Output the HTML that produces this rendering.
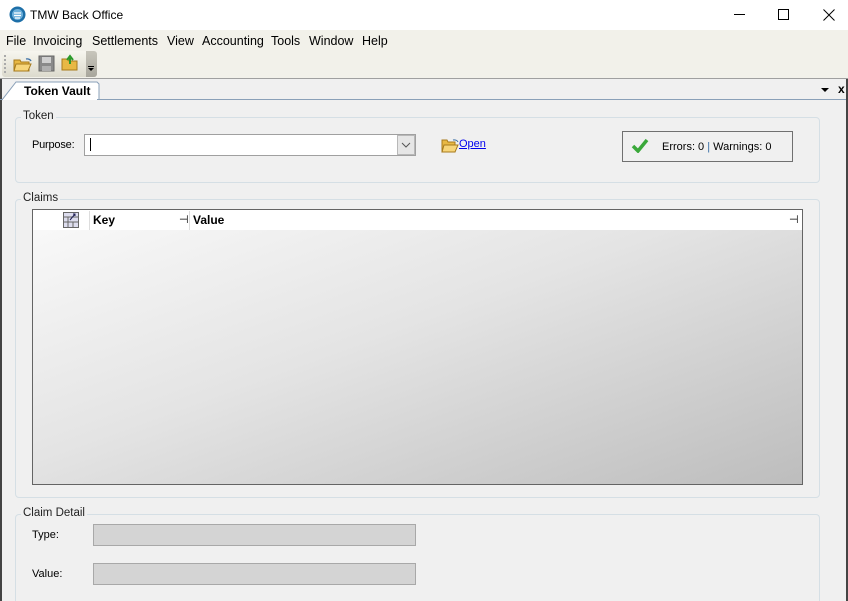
<!DOCTYPE html>
<html style="overflow:hidden;width:848px;height:601px"><head><meta charset="utf-8"><style>
*{box-sizing:border-box;margin:0;padding:0}
body{width:848px;height:601px;overflow:hidden;background:#f0f0f0;font-family:"Liberation Sans",sans-serif;font-size:12px;color:#000;position:relative}
.a{position:absolute}
.m{position:absolute;top:34px;font-size:12.5px}
.grp{position:absolute;border:1px solid #d5dfe5;border-radius:4px}
.lbl{position:absolute;background:#f0f0f0;padding:0 2px;color:#222;font-size:11.5px;line-height:13px}
</style></head><body>
<div class="a" style="left:0;top:0;width:848px;height:30px;background:#fff"></div>
<svg class="a" style="top:6px;left:9px" width="17" height="17" viewBox="0 0 17 17"><circle cx="8.5" cy="8.5" r="8" fill="#1d6fa8"/><circle cx="8.5" cy="8.5" r="5.5" fill="#6fb1dc"/><path d="M5 7h7M5 9.5h7M6 12h5" stroke="#fff" stroke-width="1.2"/></svg>
<div class="a" style="left:30px;top:8px;font-size:12px">TMW Back Office</div>
<div class="a" style="left:734px;top:14px;width:11px;height:1px;background:#000"></div>
<div class="a" style="left:778px;top:9px;width:11px;height:11px;border:1px solid #000"></div>
<svg class="a" style="left:823px;top:9px" width="12" height="12"><path d="M0.5 0.5L11.5 11.5M11.5 0.5L0.5 11.5" stroke="#000" stroke-width="1"/></svg>
<div class="a" style="left:0;top:30px;width:848px;height:48px;background:#f2f1ea"></div>
<div class="m" style="left:6px">File</div>
<div class="m" style="left:33px">Invoicing</div>
<div class="m" style="left:92px">Settlements</div>
<div class="m" style="left:167px">View</div>
<div class="m" style="left:202px">Accounting</div>
<div class="m" style="left:271px">Tools</div>
<div class="m" style="left:309px">Window</div>
<div class="m" style="left:362px">Help</div>
<div class="a" style="left:2px;top:51px;width:95px;height:26px;border-radius:3px;background:linear-gradient(#f7f6ef,#dcdacd)"></div>
<div class="a" style="left:4px;top:55px;width:2px;height:18px;border-left:2px dotted #aaa"></div>
<svg class="a" style="left:13px;top:55px" width="20" height="18"><path d="M1 5h6l1 2h8v9H1z" fill="#e8b844" stroke="#a77a1c"/><path d="M3 9h15l-3 7H1z" fill="#f7d57a" stroke="#a77a1c"/><path d="M13 4a4 3 0 0 1 5 2" stroke="#3a6ea5" fill="none" stroke-width="1.3"/></svg>
<svg class="a" style="left:38px;top:55px" width="17" height="17"><rect x="1" y="1" width="15" height="15" fill="#8a8a8a" stroke="#666"/><rect x="4" y="2" width="9" height="6" fill="#d0d0d0"/><rect x="4" y="11" width="9" height="5" fill="#b0b0b0"/></svg>
<svg class="a" style="left:61px;top:54px" width="19" height="18"><path d="M1 5h6l1 2h8v9H1z" fill="#e8b844" stroke="#a77a1c"/><path d="M9 10V4M6 6l3-4 3 4" stroke="#2a9a2a" stroke-width="2" fill="none"/></svg>
<div class="a" style="left:86px;top:51px;width:11px;height:26px;background:linear-gradient(#c8c6bc,#a8a69c);border-radius:0 3px 3px 0"></div>
<div class="a" style="left:88px;top:66px;width:6px;height:1px;background:#000"></div>
<div class="a" style="left:88px;top:68px;border:3px solid transparent;border-top:3px solid #000"></div>
<div class="a" style="left:0;top:78px;width:848px;height:1px;background:#a0a0a0"></div>
<div class="a" style="left:0;top:79px;width:2px;height:522px;background:#444"></div>
<div class="a" style="left:846px;top:79px;width:2px;height:522px;background:#444"></div>
<svg class="a" style="left:2px;top:80px" width="100" height="21"><path d="M0 20L14 2h81l2 2v16" fill="#fff" stroke="#8aa0b8"/></svg>
<div class="a" style="left:0;top:99px;width:846px;height:1px;background:#8aa0b8"></div>
<div class="a" style="left:3px;top:99px;width:94px;height:1px;background:#fff"></div>
<div class="a" style="left:24px;top:84px;font-weight:bold;font-size:12px">Token Vault</div>
<div class="a" style="left:821px;top:88px;border:4px solid transparent;border-top:4px solid #000"></div>
<div class="a" style="left:838px;top:82px;font-weight:bold;font-size:12px">x</div>
<div class="grp" style="left:15px;top:117px;width:805px;height:66px"></div>
<div class="lbl" style="left:21px;top:110px">Token</div>
<div class="a" style="left:32px;top:139px;font-size:11px;letter-spacing:-0.2px">Purpose:</div>
<div class="a" style="left:84px;top:134px;width:332px;height:22px;background:#fff;border:1px solid #a0a0a0"></div>
<div class="a" style="left:90px;top:138px;width:1px;height:13px;background:#000"></div>
<div class="a" style="left:397px;top:135px;width:18px;height:20px;background:#e6e6e6;border:1px solid #b8b8b8"></div>
<svg class="a" style="left:401px;top:142px" width="10" height="6"><path d="M1 1l4 4 4-4" stroke="#555" fill="none"/></svg>
<svg class="a" style="left:441px;top:137px" width="18" height="16"><path d="M1 3h5l1 2h7v10H1z" fill="#e8b844" stroke="#a77a1c"/><path d="M3 8h14l-3 7H1z" fill="#f7d57a" stroke="#a77a1c"/><path d="M12 3a4 3 0 0 1 5 2" stroke="#3a6ea5" fill="none"/></svg>
<div class="a" style="left:459px;top:138px;color:#0000ee;text-decoration:underline;font-size:11px">Open</div>
<div class="a" style="left:622px;top:131px;width:171px;height:31px;border:1px solid #707070"></div>
<svg class="a" style="left:631px;top:138px" width="18" height="15"><path d="M2 8l5 5L16 2" stroke="#3aa83a" stroke-width="3.5" fill="none"/></svg>
<div class="a" style="left:662px;top:141px;font-size:11px">Errors: 0 <span style="color:#3a6ea5">|</span> Warnings: 0</div>
<div class="grp" style="left:15px;top:199px;width:805px;height:299px"></div>
<div class="lbl" style="left:21px;top:192px">Claims</div>
<div class="a" style="left:32px;top:209px;width:771px;height:276px;border:1px solid #646464;background:linear-gradient(160deg,#fafafa 0%,#e4e4e4 45%,#bdbdbd 100%)"></div>
<div class="a" style="left:33px;top:210px;width:769px;height:20px;background:#fff"></div>
<svg class="a" style="left:63px;top:212px" width="16" height="16"><rect x="0.5" y="0.5" width="15" height="15" fill="#dde" stroke="#666"/><path d="M0 5h16M0 10h16M5 5v11M10 10v6" stroke="#666"/><path d="M7 8l5-6M10 2h2v2" stroke="#225" fill="none"/></svg>
<div class="a" style="left:89px;top:211px;width:1px;height:19px;background:#ddd"></div>
<div class="a" style="left:93px;top:213px;font-weight:bold">Key</div>
<div class="a" style="left:179px;top:213px;font-size:11px">⊣</div>
<div class="a" style="left:189px;top:211px;width:1px;height:19px;background:#ddd"></div>
<div class="a" style="left:193px;top:213px;font-weight:bold">Value</div>
<div class="a" style="left:789px;top:213px;font-size:11px">⊣</div>
<div class="grp" style="left:15px;top:514px;width:805px;height:87px;border-bottom:none;border-radius:4px 4px 0 0"></div>
<div class="lbl" style="left:21px;top:507px">Claim Detail</div>
<div class="a" style="left:32px;top:529px;font-size:11px">Type:</div>
<div class="a" style="left:93px;top:524px;width:323px;height:22px;background:#d4d4d4;border:1px solid #a8a8a8"></div>
<div class="a" style="left:32px;top:568px;font-size:11px">Value:</div>
<div class="a" style="left:93px;top:563px;width:323px;height:22px;background:#d4d4d4;border:1px solid #a8a8a8"></div>
</body></html>
